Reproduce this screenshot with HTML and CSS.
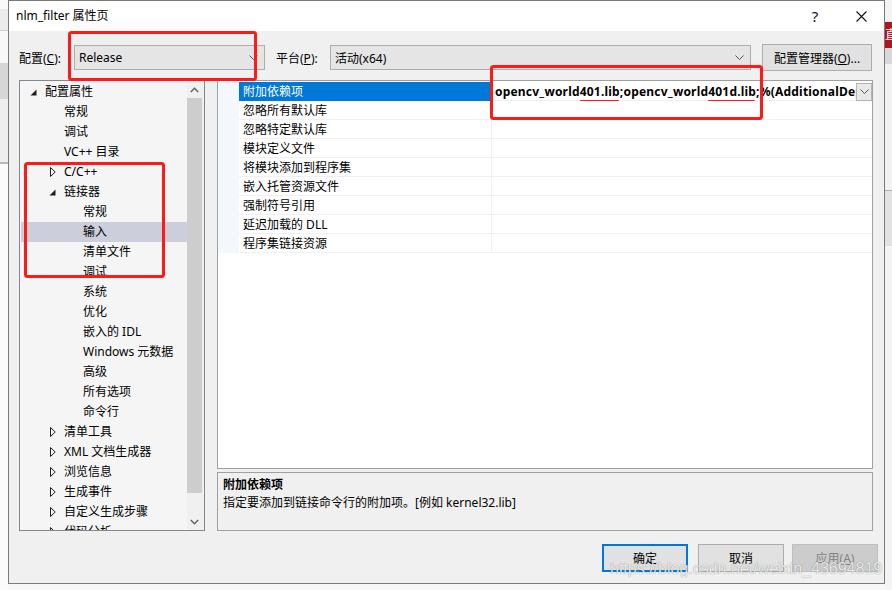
FILE: index.html
```html
<!DOCTYPE html>
<html lang="zh-CN">
<head>
  <meta charset="UTF-8">
  <title>nlm_filter 属性页</title>
  <link rel="stylesheet" href="styles.css">
</head>
<body>
  <div class="desk">
    <!-- bits of the window behind the dialog -->
    <div class="bg-left">
      <div class="strip s-white"></div>
      <div class="strip s-tab"></div>
      <div class="strip s-light"></div>
      <div class="strip s-dark"></div>
      <div class="strip s-mid"></div>
      <div class="strip s-rest"></div>
    </div>

    <div class="dialog">
      <div class="titlebar">
        <span class="title">nlm_filter 属性页</span>
        <span class="tb-btn">?</span>
        <span class="tb-btn">
          <svg width="11" height="11" viewBox="0 0 11 11"><path d="M0.5 0.5 L10.5 10.5 M10.5 0.5 L0.5 10.5" stroke="#111" stroke-width="1.1"/></svg>
        </span>
      </div>

      <div class="dlg-body">
        <div class="config-row">
          <span class="lbl lbl-config">配置(<u>C</u>):</span>
          <div class="combo combo-config">
            <span>Release</span>
            <svg width="9" height="5" viewBox="0 0 9 5"><path d="M0.5 0.5 L4.5 4.5 L8.5 0.5" fill="none" stroke="#555"/></svg>
          </div>
          <span class="lbl lbl-platform">平台(<u>P</u>):</span>
          <div class="combo combo-platform">
            <span>活动(x64)</span>
            <svg width="9" height="5" viewBox="0 0 9 5"><path d="M0.5 0.5 L4.5 4.5 L8.5 0.5" fill="none" stroke="#555"/></svg>
          </div>
          <button class="btn btn-manager">配置管理器(<u>O</u>)...</button>
        </div>

        <div class="main">
          <div class="tree">
            <ul class="tree-list">
              <li class="node lv0"><span class="exp"><svg width="7" height="7" viewBox="0 0 7 7"><path d="M6.5 0.5 L6.5 6.5 L0.5 6.5 Z" fill="#1e1e1e"/></svg></span>配置属性</li>
              <li class="node lv1"><span class="exp"></span>常规</li>
              <li class="node lv1"><span class="exp"></span>调试</li>
              <li class="node lv1"><span class="exp"></span>VC++ 目录</li>
              <li class="node lv1"><span class="exp"><svg class="closed" width="6" height="10" viewBox="0 0 6 10"><path d="M0.5 0.5 L5.2 5 L0.5 9.5 Z" fill="none" stroke="#1e1e1e"/></svg></span>C/C++</li>
              <li class="node lv1"><span class="exp"><svg width="7" height="7" viewBox="0 0 7 7"><path d="M6.5 0.5 L6.5 6.5 L0.5 6.5 Z" fill="#1e1e1e"/></svg></span>链接器</li>
              <li class="node lv2"><span class="exp"></span>常规</li>
              <li class="node lv2 selected"><span class="exp"></span>输入</li>
              <li class="node lv2"><span class="exp"></span>清单文件</li>
              <li class="node lv2"><span class="exp"></span>调试</li>
              <li class="node lv2"><span class="exp"></span>系统</li>
              <li class="node lv2"><span class="exp"></span>优化</li>
              <li class="node lv2"><span class="exp"></span>嵌入的 IDL</li>
              <li class="node lv2"><span class="exp"></span>Windows 元数据</li>
              <li class="node lv2"><span class="exp"></span>高级</li>
              <li class="node lv2"><span class="exp"></span>所有选项</li>
              <li class="node lv2"><span class="exp"></span>命令行</li>
              <li class="node lv1"><span class="exp"><svg class="closed" width="6" height="10" viewBox="0 0 6 10"><path d="M0.5 0.5 L5.2 5 L0.5 9.5 Z" fill="none" stroke="#1e1e1e"/></svg></span>清单工具</li>
              <li class="node lv1"><span class="exp"><svg class="closed" width="6" height="10" viewBox="0 0 6 10"><path d="M0.5 0.5 L5.2 5 L0.5 9.5 Z" fill="none" stroke="#1e1e1e"/></svg></span>XML 文档生成器</li>
              <li class="node lv1"><span class="exp"><svg class="closed" width="6" height="10" viewBox="0 0 6 10"><path d="M0.5 0.5 L5.2 5 L0.5 9.5 Z" fill="none" stroke="#1e1e1e"/></svg></span>浏览信息</li>
              <li class="node lv1"><span class="exp"><svg class="closed" width="6" height="10" viewBox="0 0 6 10"><path d="M0.5 0.5 L5.2 5 L0.5 9.5 Z" fill="none" stroke="#1e1e1e"/></svg></span>生成事件</li>
              <li class="node lv1"><span class="exp"><svg class="closed" width="6" height="10" viewBox="0 0 6 10"><path d="M0.5 0.5 L5.2 5 L0.5 9.5 Z" fill="none" stroke="#1e1e1e"/></svg></span>自定义生成步骤</li>
              <li class="node lv1"><span class="exp"><svg class="closed" width="6" height="10" viewBox="0 0 6 10"><path d="M0.5 0.5 L5.2 5 L0.5 9.5 Z" fill="none" stroke="#1e1e1e"/></svg></span>代码分析</li>
            </ul>
            <div class="scrollbar">
              <div class="sb-arrow">
                <svg width="9" height="6" viewBox="0 0 9 6"><path d="M0.8 5 L4.5 1.2 L8.2 5" fill="none" stroke="#606060" stroke-width="1.4"/></svg>
              </div>
              <div class="sb-thumb"></div>
              <div class="sb-space"></div>
              <div class="sb-arrow">
                <svg width="9" height="6" viewBox="0 0 9 6"><path d="M0.8 1 L4.5 4.8 L8.2 1" fill="none" stroke="#606060" stroke-width="1.4"/></svg>
              </div>
            </div>
          </div>

          <div class="right">
            <div class="grid">
              <div class="row">
                <div class="gutter"></div>
                <div class="name selected">附加依赖项</div>
                <div class="value">
                  <span class="value-text">opencv_world<span class="mark">401.lib</span>;opencv_world<span class="mark">401d.lib</span>;%(AdditionalDependencies)</span>
                  <span class="drop">
                    <svg width="9" height="5" viewBox="0 0 9 5"><path d="M0.5 0.5 L4.5 4.5 L8.5 0.5" fill="none" stroke="#555"/></svg>
                  </span>
                </div>
              </div>
              <div class="row"><div class="gutter"></div><div class="name">忽略所有默认库</div><div class="value"></div></div>
              <div class="row"><div class="gutter"></div><div class="name">忽略特定默认库</div><div class="value"></div></div>
              <div class="row"><div class="gutter"></div><div class="name">模块定义文件</div><div class="value"></div></div>
              <div class="row"><div class="gutter"></div><div class="name">将模块添加到程序集</div><div class="value"></div></div>
              <div class="row"><div class="gutter"></div><div class="name">嵌入托管资源文件</div><div class="value"></div></div>
              <div class="row"><div class="gutter"></div><div class="name">强制符号引用</div><div class="value"></div></div>
              <div class="row"><div class="gutter"></div><div class="name">延迟加载的 DLL</div><div class="value"></div></div>
              <div class="row"><div class="gutter"></div><div class="name">程序集链接资源</div><div class="value"></div></div>
            </div>
            <div class="desc">
              <div class="desc-title">附加依赖项</div>
              <div class="desc-text">指定要添加到链接命令行的附加项。[例如 kernel32.lib]</div>
            </div>
          </div>
        </div>

        <div class="footer">
          <button class="btn btn-ok">确定</button>
          <button class="btn btn-cancel">取消</button>
          <button class="btn btn-apply" disabled>应用(<u>A</u>)</button>
        </div>
      </div>
    </div>

    <div class="bg-right">
      <div class="strip r-top"></div>
      <div class="strip r-red">直</div>
      <div class="strip r-gray"></div>
      <div class="strip r-light"></div>
      <div class="strip r-line"></div>
      <div class="strip r-band"></div>
      <div class="strip r-rest"></div>
    </div>

    <!-- red annotations drawn on the screenshot -->
    <svg class="annot" width="892" height="590" viewBox="0 0 892 590">
      <rect x="69.5" y="32.5" width="186" height="47" rx="2" fill="none" stroke="#ff1a1a" stroke-width="3"/>
      <rect x="491.5" y="66.5" width="270" height="52" rx="2" fill="none" stroke="#ff1a1a" stroke-width="3"/>
      <rect x="25.5" y="163.5" width="138" height="113" rx="2" fill="none" stroke="#ff1a1a" stroke-width="3"/>
    </svg>

    <div class="watermark">https://blog.csdn.net/weixin_43694819</div>
  </div>
</body>
</html>
```

FILE: styles.css
```css
* {
  box-sizing: border-box;
}

body {
  margin: 0;
  background: #f7f7f7;
  font-family: "Noto Sans", "Noto Sans CJK SC", sans-serif;
  font-size: 12px;
  color: #1e1e1e;
  overflow: hidden;
}

.desk {
  position: relative;
  width: 892px;
  height: 590px;
  display: flex;
  align-items: flex-start;
  overflow: hidden;
}

/* window behind */
.bg-left {
  width: 8px;
  height: 590px;
  display: flex;
  flex-direction: column;
}

.bg-right {
  width: 7px;
  height: 590px;
  display: flex;
  flex-direction: column;
}

.strip {
  flex-shrink: 0;
}

.s-white { height: 9px; background: #fafafa; }
.s-tab { height: 22px; background: #ececec; border-bottom: 1px solid #d0d0d0; }
.s-light { height: 32px; background: #f8f8f8; }
.s-dark { height: 36px; background: #d6d6d6; }
.s-mid { height: 65px; background: #efefef; border-bottom: 2px solid #b8b8b8; }
.s-rest { flex: 1; background: #fbfbfb; }

.r-top { height: 22px; background: #f3f3f3; }
.r-red {
  height: 26px;
  background: #b5121b;
  color: #fff;
  font-size: 12px;
  line-height: 26px;
  overflow: hidden;
}
.r-gray { height: 16px; background: #d8d8d8; }
.r-light { height: 126px; background: #f2f2f2; }
.r-line { height: 1px; background: #b0b0b0; }
.r-band { height: 55px; background: #e2e2e2; }
.r-rest { flex: 1; background: #f4f4f4; }

/* dialog */
.dialog {
  width: 877px;
  height: 584px;
  flex-shrink: 0;
  border: 1px solid #7a7a7a;
  background: #f0f0f0;
  display: flex;
  flex-direction: column;
}

.titlebar {
  height: 30px;
  background: #fff;
  display: flex;
  align-items: center;
  padding-left: 7px;
  line-height: 30px;
}

.title {
  flex: 1;
  color: #000;
}

.tb-btn {
  width: 46px;
  height: 30px;
  display: flex;
  align-items: center;
  justify-content: center;
  font-size: 15px;
  color: #111;
}

.dlg-body {
  flex: 1;
  display: flex;
  flex-direction: column;
}

.config-row {
  display: flex;
  align-items: center;
  height: 27px;
  margin-top: 13px;
  padding-left: 10px;
}

.lbl {
  color: #000;
}

.lbl-config {
  width: 55px;
}

.lbl-platform {
  width: 54px;
  margin-left: 11px;
}

.combo {
  height: 25px;
  background: #e5e5e5;
  border: 1px solid #adadad;
  display: flex;
  align-items: center;
  justify-content: space-between;
  padding: 0 6px 0 4px;
  color: #000;
}

.combo-config {
  width: 191px;
}

.combo-platform {
  width: 421px;
}

.btn {
  font-family: inherit;
  font-size: 12px;
  color: #000;
  background: #e1e1e1;
  border: 1px solid #adadad;
  padding: 0;
}

.btn-manager {
  width: 110px;
  height: 27px;
  margin-left: 11px;
}

.main {
  display: flex;
  height: 451px;
  margin-top: 9px;
  padding: 0 11px 0 10px;
}

/* tree */
.tree {
  width: 186px;
  border: 1px solid #828790;
  background: #f5f5f5;
  display: flex;
  overflow: hidden;
}

.tree-list {
  flex: 1;
  margin: 0;
  padding: 1px 0 0;
  list-style: none;
  overflow: hidden;
}

.node {
  height: 20px;
  line-height: 20px;
  display: flex;
  align-items: center;
  white-space: nowrap;
  color: #000;
}

.node.lv0 { padding-left: 10px; }
.node.lv1 { padding-left: 29px; }
.node.lv2 { padding-left: 48px; }

.node.selected {
  background: #cccedb;
  margin-left: 1px;
  padding-left: 47px;
}

.exp {
  width: 15px;
  height: 20px;
  display: flex;
  align-items: center;
  flex-shrink: 0;
}

.exp .closed {
  margin-left: 1px;
}

.scrollbar {
  width: 17px;
  background: #f0f0f0;
  display: flex;
  flex-direction: column;
}

.sb-arrow {
  height: 17px;
  display: flex;
  align-items: center;
  justify-content: center;
  padding-right: 2px;
}

.sb-thumb {
  height: 395px;
  width: 15px;
  background: #cdcdcd;
}

.sb-space {
  flex: 1;
}

/* right side */
.right {
  flex: 1;
  margin-left: 12px;
  display: flex;
  flex-direction: column;
}

.grid {
  height: 389px;
  background: #fff;
  border: 1px solid #a0a0a0;
  padding-top: 1px;
}

.row {
  display: grid;
  grid-template-columns: 21px 252px 1fr;
  height: 19px;
  border-bottom: 1px solid #eef0f4;
}

.gutter {
  background: #f4f7fb;
}

.name {
  padding-left: 4px;
  line-height: 19px;
  color: #000;
  white-space: nowrap;
}

.name.selected {
  background: #0078d7;
  color: #fff;
}

.value {
  border-left: 1px solid #eef0f4;
  display: flex;
  align-items: center;
  min-width: 0;
}

.value-text {
  flex: 1;
  padding-left: 3px;
  font-weight: bold;
  letter-spacing: 0.2px;
  color: #000;
  white-space: nowrap;
  overflow: hidden;
  line-height: 18px;
}

.mark {
  position: relative;
}

.mark::after {
  content: "";
  position: absolute;
  left: 0;
  right: 1px;
  bottom: -2px;
  height: 2px;
  border-radius: 2px;
  background: #ff1a1a;
}

.drop {
  width: 16px;
  height: 18px;
  background: #e8e8e8;
  border: 1px solid #b4b4b4;
  display: flex;
  align-items: center;
  justify-content: center;
  flex-shrink: 0;
}

.desc {
  height: 59px;
  margin-top: 3px;
  border: 1px solid #a0a0a0;
  padding: 3px 5px;
  line-height: 18px;
  color: #000;
}

.desc-title {
  font-weight: bold;
}

/* buttons */
.footer {
  display: flex;
  justify-content: flex-end;
  margin-top: 13px;
  padding-right: 6px;
}

.footer .btn {
  width: 86px;
  height: 28px;
}

.btn-ok {
  border: 2px solid #0078d7;
}

.btn-cancel {
  margin-left: 10px;
}

.btn-apply {
  margin-left: 8px;
  background: #cccccc;
  border-color: #bfbfbf;
  color: #838383;
}

/* overlays */
.annot {
  position: absolute;
  left: 0;
  top: 0;
  pointer-events: none;
}

.watermark {
  position: absolute;
  left: 610px;
  top: 560px;
  font-family: "Liberation Sans", sans-serif;
  font-size: 16px;
  color: rgba(255, 255, 255, 0.85);
  text-shadow: 0 0 1px rgba(0, 0, 0, 0.5);
  white-space: nowrap;
  pointer-events: none;
}
```
